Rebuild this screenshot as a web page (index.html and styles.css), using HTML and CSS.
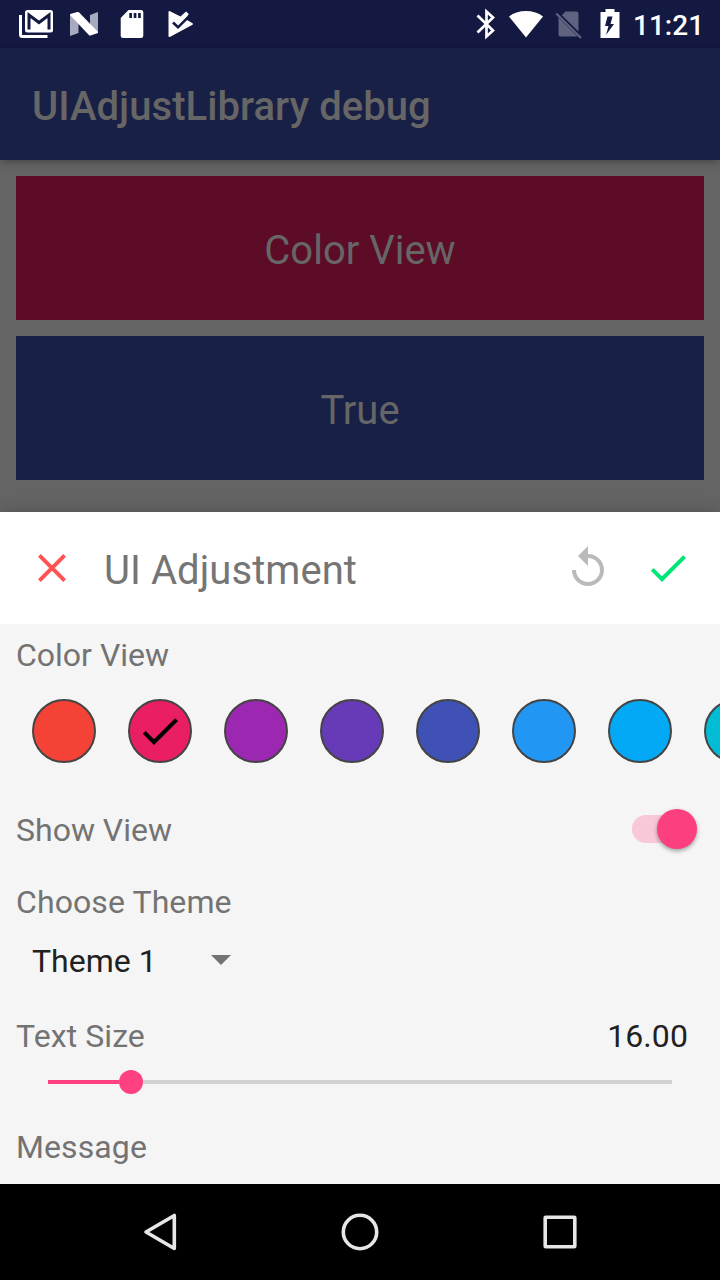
FILE: index.html
```html
<!DOCTYPE html>
<html lang="en">
<head>
<meta charset="utf-8">
<title>UIAdjustLibrary debug</title>
<link rel="stylesheet" href="styles.css">
</head>
<body>
<div class="screen">
  <div class="status-bar">
    <div class="notifications">
      <svg width="40" height="40" viewBox="0 0 40 40"><path d="M4.500 11v19.500a2 2 0 0 0 2 2H31.500" fill="none" stroke="#fff" stroke-width="3"/><rect x="9" y="6" width="28" height="22.500" rx="2.500" fill="#fff"/><path d="M13 25.500V11l10 7.500L33 11v14.500" fill="none" stroke="#141a42" stroke-width="3"/></svg>
      <svg width="40" height="40" viewBox="0 0 40 40"><path d="M6 10.500L14.500 8v21L6 32zM26 11l8-3v21l-8-4z" fill="#a8aabd"/><path d="M6 11q0-1 1-1.300l6.500-1.600q1-.2 1.700.5L34 28v1l-7.500 2.600q-.8.200-1.400-.4z" fill="#fff"/></svg>
      <svg width="40" height="40" viewBox="0 0 40 40"><path d="M16.500 6H29q2.300 0 2.300 2.300v23.400Q31.300 34 29 34H11q-2.300 0-2.300-2.300V14z" fill="#fff"/><path d="M17.300 9h2.700v5h-2.700zM21.700 9h2.700v5h-2.700zM26.100 9h2.700v5h-2.700z" fill="#141a42"/></svg>
      <svg width="40" height="40" viewBox="0 0 40 40"><path d="M8.500 8q0-1.500 1.500-.8L20.500 12.500l5.500-5 2.800 2.500-3.500 5 7.200 4.300q1 .7 0 1.400L10.300 32.700q-1.800.8-1.800-1z" fill="#fff"/><path d="M13 18.500l5 4.800 9.500-9.500" fill="none" stroke="#141a42" stroke-width="2.600"/></svg>
    </div>
    <div class="indicators">
      <svg class="bluetooth" width="20" height="32" viewBox="0 0 20 32"><path d="M1.500 7.500L17 22.500 10.500 28.500V3.500L17 9.500 1.500 24.500" fill="none" stroke="#fff" stroke-width="2.700"/></svg>
      <svg class="wifi" width="34" height="32" viewBox="0 0 34 32"><path d="M0 9.500Q7 4 17 4t17 5.500L17 30.500z" fill="#fff"/></svg>
      <svg class="sim" width="28" height="32" viewBox="0 0 28 32"><path d="M10.500 3.500H21.500q2 0 2 2V23.500L6.800 7.200zM3.500 9.500L22.500 28.500H5.500q-2 0-2-2z" fill="#5f637f"/><path d="M1.200 5.500L26 30" stroke="#5f637f" stroke-width="2.200"/></svg>
      <svg class="battery" width="20" height="32" viewBox="0 0 20 32"><path d="M5.500 1h9v3H19.500v26H.5V4h5z" fill="#fff"/><path d="M12.500 8.500H7.500L5 18h3.500l-2.500 9 8-11h-3.500z" fill="#141a42"/></svg>
      <span class="clock">11:21</span>
    </div>
  </div>
  <header class="app-bar">UIAdjustLibrary debug</header>
  <main class="content">
    <div class="card card-pink">Color View</div>
    <div class="card card-indigo">True</div>
  </main>
  <section class="sheet">
    <div class="sheet-header">
      <svg width="48" height="48" viewBox="0 0 24 24"><path d="M19 6.410L17.590 5 12 10.590 6.410 5 5 6.410 10.590 12 5 17.590 6.410 19 12 13.410 17.590 19 19 17.590 13.410 12z" fill="#ff5252"/></svg>
      <h2 class="sheet-title">UI Adjustment</h2>
      <svg class="reset" width="48" height="48" viewBox="0 0 24 24"><path d="M12 5V1L7 6l5 5V7c3.310 0 6 2.690 6 6s-2.690 6-6 6-6-2.690-6-6H4c0 4.420 3.580 8 8 8s8-3.580 8-8-3.580-8-8-8z" fill="#bababa"/></svg>
      <svg width="48" height="48" viewBox="0 0 24 24"><path d="M9 16.170L4.830 12l-1.420 1.410L9 19 21 7l-1.410-1.410z" fill="#00e676"/></svg>
    </div>
    <div class="options">
      <div class="label">Color View</div>
      <div class="swatches">
        <span class="swatch red"></span>
        <span class="swatch pink"><svg width="48" height="48" viewBox="0 0 24 24"><path d="M9 16.170L4.830 12l-1.420 1.410L9 19 21 7l-1.410-1.410z"/></svg></span>
        <span class="swatch purple"></span>
        <span class="swatch deep-purple"></span>
        <span class="swatch indigo"></span>
        <span class="swatch blue"></span>
        <span class="swatch light-blue"></span>
        <span class="swatch cyan"></span>
      </div>
      <div class="row show-row"><span class="label">Show View</span><span class="switch"><span class="thumb"></span></span></div>
      <div class="label choose">Choose Theme</div>
      <div class="spinner"><span>Theme 1</span><svg class="caret" width="20" height="10" viewBox="0 0 20 10"><path d="M0 0h20L10 10z" fill="#737373"/></svg></div>
      <div class="row size-row"><span class="label">Text Size</span><span class="value">16.00</span></div>
      <div class="slider"><span class="filled"></span><span class="knob"></span><span class="rest"></span></div>
      <div class="label message">Message</div>
    </div>
  </section>
  <nav class="nav-bar">
    <svg width="48" height="48" viewBox="0 0 48 48"><path d="M38.300 7.500v33L10 24z" fill="none" stroke="#e6e6e6" stroke-width="3.600" stroke-linejoin="round"/></svg>
    <svg width="48" height="48" viewBox="0 0 48 48"><circle cx="24" cy="24" r="16.700" fill="none" stroke="#e6e6e6" stroke-width="3.600"/></svg>
    <svg width="48" height="48" viewBox="0 0 48 48"><rect x="9.200" y="9.200" width="29.600" height="29.600" rx=".6" fill="none" stroke="#e6e6e6" stroke-width="3.600"/></svg>
  </nav>
</div>
</body>
</html>
```

FILE: styles.css
```css
* { box-sizing: border-box; }
body { margin: 0; font-family: Roboto, sans-serif; }
svg { display: block; flex: none; }
.screen { width: 720px; height: 1280px; display: flex; flex-direction: column; overflow: hidden; background: #646464; }
.status-bar { height: 48px; flex: none; background: #131940; display: flex; justify-content: space-between; padding: 4px 16px 0 16px; }
.notifications { display: flex; gap: 8px; }
.indicators { display: flex; align-items: flex-start; padding-top: 4px; }
.wifi { margin-left: 13px; margin-top: -1px; }
.sim { margin-left: 12px; }
.battery { margin-left: 17px; }
.clock { margin-left: 13px; padding-top: 1px; font-size: 28px; font-weight: 500; line-height: 34px; color: #fff; width: 71px; }
.app-bar { position: relative; height: 112px; flex: none; background: #192046; color: #666; font-size: 40px; font-weight: 500; line-height: 48px; letter-spacing: .05px; padding: 35px 32px 0; box-shadow: 0 2px 8px rgba(0, 0, 0, .3); }
.content { height: 352px; flex: none; padding: 16px; display: flex; flex-direction: column; gap: 16px; }
.card { height: 144px; padding-top: 51px; text-align: center; font-size: 40px; line-height: 48px; color: #666; }
.card-pink { background: #5d0c27; }
.card-indigo { background: #192046; }
.sheet { position: relative; height: 672px; flex: none; background: #f5f5f5; box-shadow: 0 0 16px rgba(0, 0, 0, .2); }
.sheet-header { height: 112px; background: #fff; display: flex; align-items: center; padding: 0 28px; }
.sheet-title { margin: 6px auto 0 28px; font-size: 40px; font-weight: 400; line-height: 48px; letter-spacing: .06px; color: #757575; }
.reset { margin-right: 32px; }
.options { padding: 12px 16px 0; font-size: 32px; line-height: 38px; color: #212121; }
.label { color: #737373; }
.swatches { display: flex; gap: 32px; margin: 25px -16px 0 16px; overflow: hidden; }
.swatch { width: 64px; height: 64px; flex: none; border: 2px solid #444; border-radius: 50%; display: grid; place-items: center; }
.red { background: #f44336; }
.pink { background: #e91e63; }
.purple { background: #9c27b0; }
.deep-purple { background: #673ab7; }
.indigo { background: #3f51b5; }
.blue { background: #2196f3; }
.light-blue { background: #03a9f4; }
.cyan { background: #00bcd4; }
.row { display: flex; justify-content: space-between; align-items: center; }
.show-row { margin-top: 48px; }
.switch { width: 65px; height: 28px; margin: -2px 7px 0 0; border-radius: 14px; background: #f8c8d8; display: flex; justify-content: flex-end; align-items: center; }
.thumb { width: 40px; height: 40px; flex: none; border-radius: 50%; background: #fc407f; box-shadow: 0 2px 4px rgba(0, 0, 0, .35); }
.choose { margin-top: 34px; letter-spacing: .1px; }
.spinner { margin: 21px 0 0 16px; width: 199px; display: flex; align-items: center; justify-content: space-between; }
.caret { margin-bottom: 2px; }
.size-row { margin-top: 37px; padding-right: 16px; letter-spacing: .08px; }
.slider { height: 24px; margin: 15px 32px 0; display: flex; align-items: center; }
.filled { width: 71px; height: 4px; background: #ff4081; }
.knob { width: 24px; height: 24px; border-radius: 50%; background: #ff4081; }
.rest { flex: 1; height: 4px; background: #d1d1d1; }
.message { margin-top: 34px; letter-spacing: .1px; }
.nav-bar { height: 96px; flex: none; background: #000; display: flex; align-items: center; justify-content: center; gap: 152px; }
```
